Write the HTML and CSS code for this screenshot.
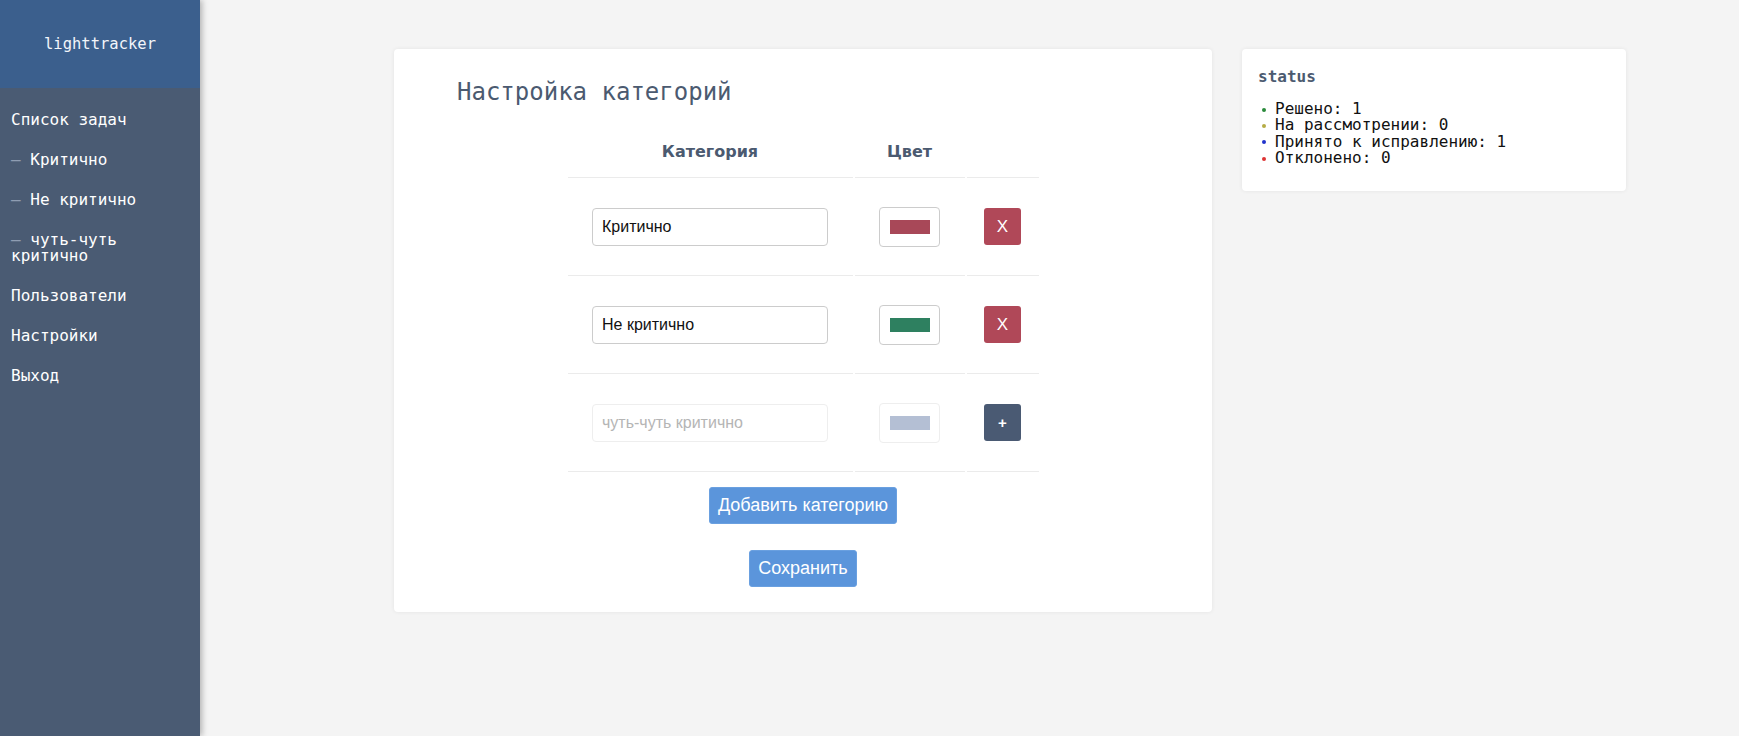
FILE: index.html
```html
<!DOCTYPE html>
<html lang="ru">
<head>
<meta charset="utf-8">
<title>lighttracker</title>
<link rel="stylesheet" href="styles.css">
</head>
<body>
<aside class="sidebar">
  <div class="brand">lighttracker</div>
  <nav class="nav">
    <a class="nav-item" href="#">Список задач</a>
    <a class="nav-item sub" href="#">Критично</a>
    <a class="nav-item sub" href="#">Не критично</a>
    <a class="nav-item sub" href="#">чуть-чуть критично</a>
    <a class="nav-item" href="#">Пользователи</a>
    <a class="nav-item" href="#">Настройки</a>
    <a class="nav-item" href="#">Выход</a>
  </nav>
</aside>
<main class="main">
  <section class="card settings">
    <h2 class="title">Настройка категорий</h2>
    <table class="cats">
      <thead>
        <tr><th class="c1">Категория</th><th class="c2">Цвет</th><th class="c3"></th></tr>
      </thead>
      <tbody>
        <tr>
          <td><input class="field" type="text" value="Критично"></td>
          <td><span class="color-box"><span class="swatch red"></span></span></td>
          <td><button class="btn-sq del">X</button></td>
        </tr>
        <tr>
          <td><input class="field" type="text" value="Не критично"></td>
          <td><span class="color-box"><span class="swatch green"></span></span></td>
          <td><button class="btn-sq del">X</button></td>
        </tr>
        <tr>
          <td><input class="field new" type="text" placeholder="чуть-чуть критично"></td>
          <td><span class="color-box new"><span class="swatch light"></span></span></td>
          <td><button class="btn-sq add">+</button></td>
        </tr>
      </tbody>
    </table>
    <div class="actions">
      <button class="btn-blue">Добавить категорию</button>
      <button class="btn-blue">Сохранить</button>
    </div>
  </section>
  <section class="card status">
    <h3 class="status-title">status</h3>
    <ul class="status-list">
      <li class="s-green">Решено: 1</li>
      <li class="s-olive">На рассмотрении: 0</li>
      <li class="s-blue">Принято к исправлению: 1</li>
      <li class="s-red">Отклонено: 0</li>
    </ul>
  </section>
</main>
</body>
</html>
```
FILE: styles.css
```css
html, body {
  margin: 0;
  padding: 0;
  height: 100%;
}
body {
  display: flex;
  background: #f4f4f4;
  font-family: "DejaVu Sans Mono", "Liberation Mono", monospace;
  overflow: hidden;
}
.sidebar {
  width: 200px;
  flex: 0 0 200px;
  height: 736px;
  background: #4a5b73;
  box-shadow: 2px 0 6px rgba(0, 0, 0, 0.28);
  position: relative;
  z-index: 1;
}
.brand {
  height: 88px;
  background: #3b5f8d;
  color: #f2f5fa;
  font-size: 15.5px;
  line-height: 88px;
  text-align: center;
}
.nav {
  display: flex;
  flex-direction: column;
  padding-top: 12px;
}
.nav-item {
  display: block;
  padding: 12px 11px;
  color: #ffffff;
  text-decoration: none;
  font-size: 16px;
  line-height: 16px;
}
.nav-item.sub::before {
  content: "— ";
  white-space: pre;
  color: #8f9db2;
}
.main {
  flex: 1;
  display: flex;
  align-items: flex-start;
  gap: 30px;
  padding: 49px 0 0 194px;
}
.card {
  background: #ffffff;
  border-radius: 4px;
  box-shadow: 0 0 4px rgba(0, 0, 0, 0.07);
  box-sizing: border-box;
}
.settings {
  width: 818px;
  padding: 28px 63px 25px;
}
.title {
  margin: 0;
  font-weight: normal;
  font-size: 24px;
  line-height: 30px;
  color: #4b5a70;
}
.cats {
  margin: 0 auto;
  border-collapse: separate;
  border-spacing: 2px 0;
}
.cats th {
  font-family: "DejaVu Sans", Verdana, sans-serif;
  font-weight: bold;
  font-size: 16px;
  line-height: 18px;
  color: #4b5a70;
  padding: 36px 0 16px;
  border-bottom: 1px solid #ebebeb;
  text-align: center;
}
.c1 { width: 285px; }
.c2 { width: 110px; }
.c3 { width: 72px; }
.cats td {
  height: 97px;
  padding: 0;
  border-bottom: 1px solid #ebebeb;
  text-align: center;
  vertical-align: middle;
}
.field {
  width: 236px;
  height: 38px;
  box-sizing: border-box;
  border: 1px solid #cccccc;
  border-radius: 4px;
  padding: 0 9px;
  font-family: "Liberation Sans", Arial, sans-serif;
  font-size: 16px;
  color: #111111;
  outline: none;
  display: block;
  margin: 0 auto;
}
.field.new {
  border-color: #eeeeee;
}
.field::placeholder {
  color: #b5b5b5;
}
.color-box {
  display: flex;
  align-items: center;
  justify-content: center;
  width: 61px;
  height: 40px;
  box-sizing: border-box;
  border: 1px solid #cccccc;
  border-radius: 4px;
  margin: 0 auto;
}
.color-box.new {
  border-color: #eeeeee;
}
.swatch {
  width: 40px;
  height: 14px;
}
.swatch.red { background: #a84858; }
.swatch.green { background: #2e8060; }
.swatch.light { background: #b4bfd4; }
.btn-sq {
  width: 37px;
  height: 37px;
  border: 0;
  border-radius: 3px;
  color: #ffffff;
  font-family: "Liberation Sans", Arial, sans-serif;
  padding: 0;
  display: block;
  margin: 0 auto;
}
.btn-sq.del {
  background: #b04858;
  font-size: 17px;
}
.btn-sq.add {
  background: #4a5a73;
  font-size: 15px;
  font-weight: bold;
}
.actions {
  display: flex;
  flex-direction: column;
  align-items: center;
  gap: 26px;
  padding-top: 15px;
}
.btn-blue {
  height: 37px;
  padding: 0 8px;
  border: 1px solid #6aa0e0;
  border-radius: 3px;
  background: #5b95db;
  color: #ffffff;
  font-family: "Liberation Sans", Arial, sans-serif;
  font-size: 18px;
}
.status {
  width: 384px;
  padding: 18px 16px 24px;
}
.status-title {
  margin: 0;
  font-size: 16px;
  line-height: 19px;
  font-weight: bold;
  color: #4b5a70;
}
.status-list {
  list-style: none;
  margin: 15px 0 0;
  padding: 0;
}
.status-list li {
  font-size: 16px;
  line-height: 16.4px;
  color: #111111;
}
.status-list li::before {
  content: "";
  display: inline-block;
  width: 4px;
  height: 4px;
  border-radius: 50%;
  margin: 0 9px 0 4px;
  vertical-align: middle;
}
.s-green::before { background: #2a8a3a; }
.s-olive::before { background: #b5ac45; }
.s-blue::before { background: #2233cc; }
.s-red::before { background: #dd3333; }
```
